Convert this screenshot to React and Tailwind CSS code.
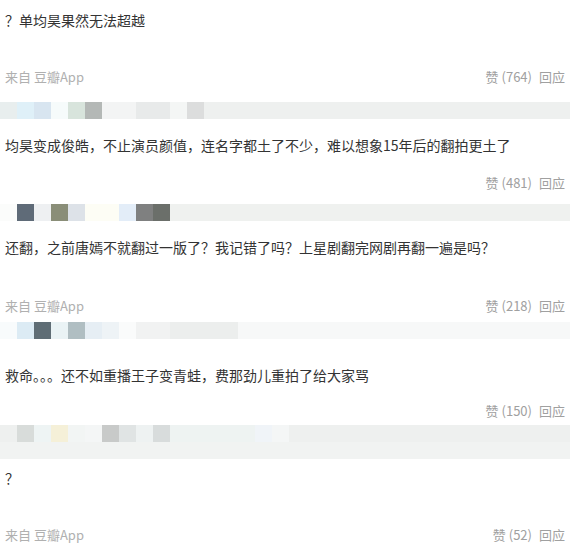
import React from "react";

const comments = [
  {
    text: "？单均昊果然无法超越",
    from: true,
    likes: 764,
    top: "pt-[10px]",
    metaGap: "mt-[37px]",
    band: {
      top: "mt-[15px]",
      cells: ["#e8eeee", "#dff0f8", "#d8e5f0", "#f6fbfb", "#d8e4dc", "#b4b8b6", "#f3f4f4", "#f3f4f4", "#e8eaea", "#e8eaea", "#f4f6f5", "#dcdddd"],
      fill: "#eef0ef",
      under: false,
    },
  },
  {
    text: "均昊变成俊皓，不止演员颜值，连名字都土了不少，难以想象15年后的翻拍更土了",
    from: false,
    likes: 481,
    top: "pt-[16px]",
    metaGap: "mt-[18px]",
    band: {
      top: "mt-[11px]",
      cells: ["#fbfcfb", "#5f6b78", "#eef0f2", "#8a8e78", "#dde2e8", "#fdfdf5", "#fdfdf5", "#e3edf8", "#7f8080", "#6b6f6a"],
      fill: "#eff1ef",
      under: false,
    },
  },
  {
    text: "还翻，之前唐嫣不就翻过一版了？我记错了吗？上星剧翻完网剧再翻一遍是吗？",
    from: true,
    likes: 218,
    top: "pt-[16px]",
    metaGap: "mt-[39px]",
    band: {
      top: "mt-[6px]",
      cells: ["#f8fbfc", "#dcebf4", "#5f6d75", "#eaf3f5", "#b0bec2", "#e6eef4", "#eef3f6", "#fafbfb", "#f1f2f2", "#f1f2f2", "#eceeed", "#eceeed", "#eceeed", "#eceeed"],
      fill: "#f7f8f8",
      under: false,
    },
  },
  {
    text: "救命。。。还不如重播王子变青蛙，费那劲儿重拍了给大家骂",
    from: false,
    likes: 150,
    top: "pt-[26px]",
    metaGap: "mt-[16px]",
    band: {
      top: "mt-[4px]",
      cells: ["#eef0ef", "#d8dcda", "#eef4f4", "#f5f0d8", "#f2f5f4", "#f4f6f6", "#c8cac9", "#e0e4e4", "#eef2f2", "#d8dcdc", "#eef3f2", "#eef3f2", "#eef3f2", "#eef3f2", "#eef3f2", "#f0f4f8", "#f4f6f6"],
      fill: "#eef0ef",
      under: true,
    },
  },
  {
    text: "？",
    from: true,
    likes: 52,
    top: "pt-[9px]",
    metaGap: "mt-[37px]",
    band: null,
  },
];

function Band({ band }) {
  return (
    <div className={band.top}>
      <div className="flex h-[17px] w-[570px]">
        {band.cells.map((c, i) => (
          <div key={i} className="h-full w-[17px] shrink-0" style={{ backgroundColor: c }} />
        ))}
        <div className="h-full flex-1" style={{ backgroundColor: band.fill }} />
      </div>
      {band.under && <div className="h-[17px] w-[570px] bg-[#f1f3f2]" />}
    </div>
  );
}

function Comment({ c }) {
  return (
    <div className={c.top}>
      <div className="px-[5px] text-[14px] leading-[20px] text-[#333]">{c.text}</div>
      <div className={`${c.metaGap} flex h-[20px] items-center justify-between pl-[5px] pr-[10px] text-[13px] leading-[20px]`}>
        <span className="text-[#b0b0b0]">{c.from ? "来自 豆瓣App" : ""}</span>
        <span className="text-[#a0a0a0]">
          赞 ({c.likes})<span className="ml-[7px]">回应</span>
        </span>
      </div>
      {c.band && <Band band={c.band} />}
    </div>
  );
}

export default function App() {
  return (
    <div
      className="h-[549px] w-[575px] overflow-hidden bg-white"
      style={{ fontFamily: '"Noto Sans CJK SC", "Noto Sans", sans-serif' }}
    >
      {comments.map((c, i) => (
        <Comment key={i} c={c} />
      ))}
    </div>
  );
}
